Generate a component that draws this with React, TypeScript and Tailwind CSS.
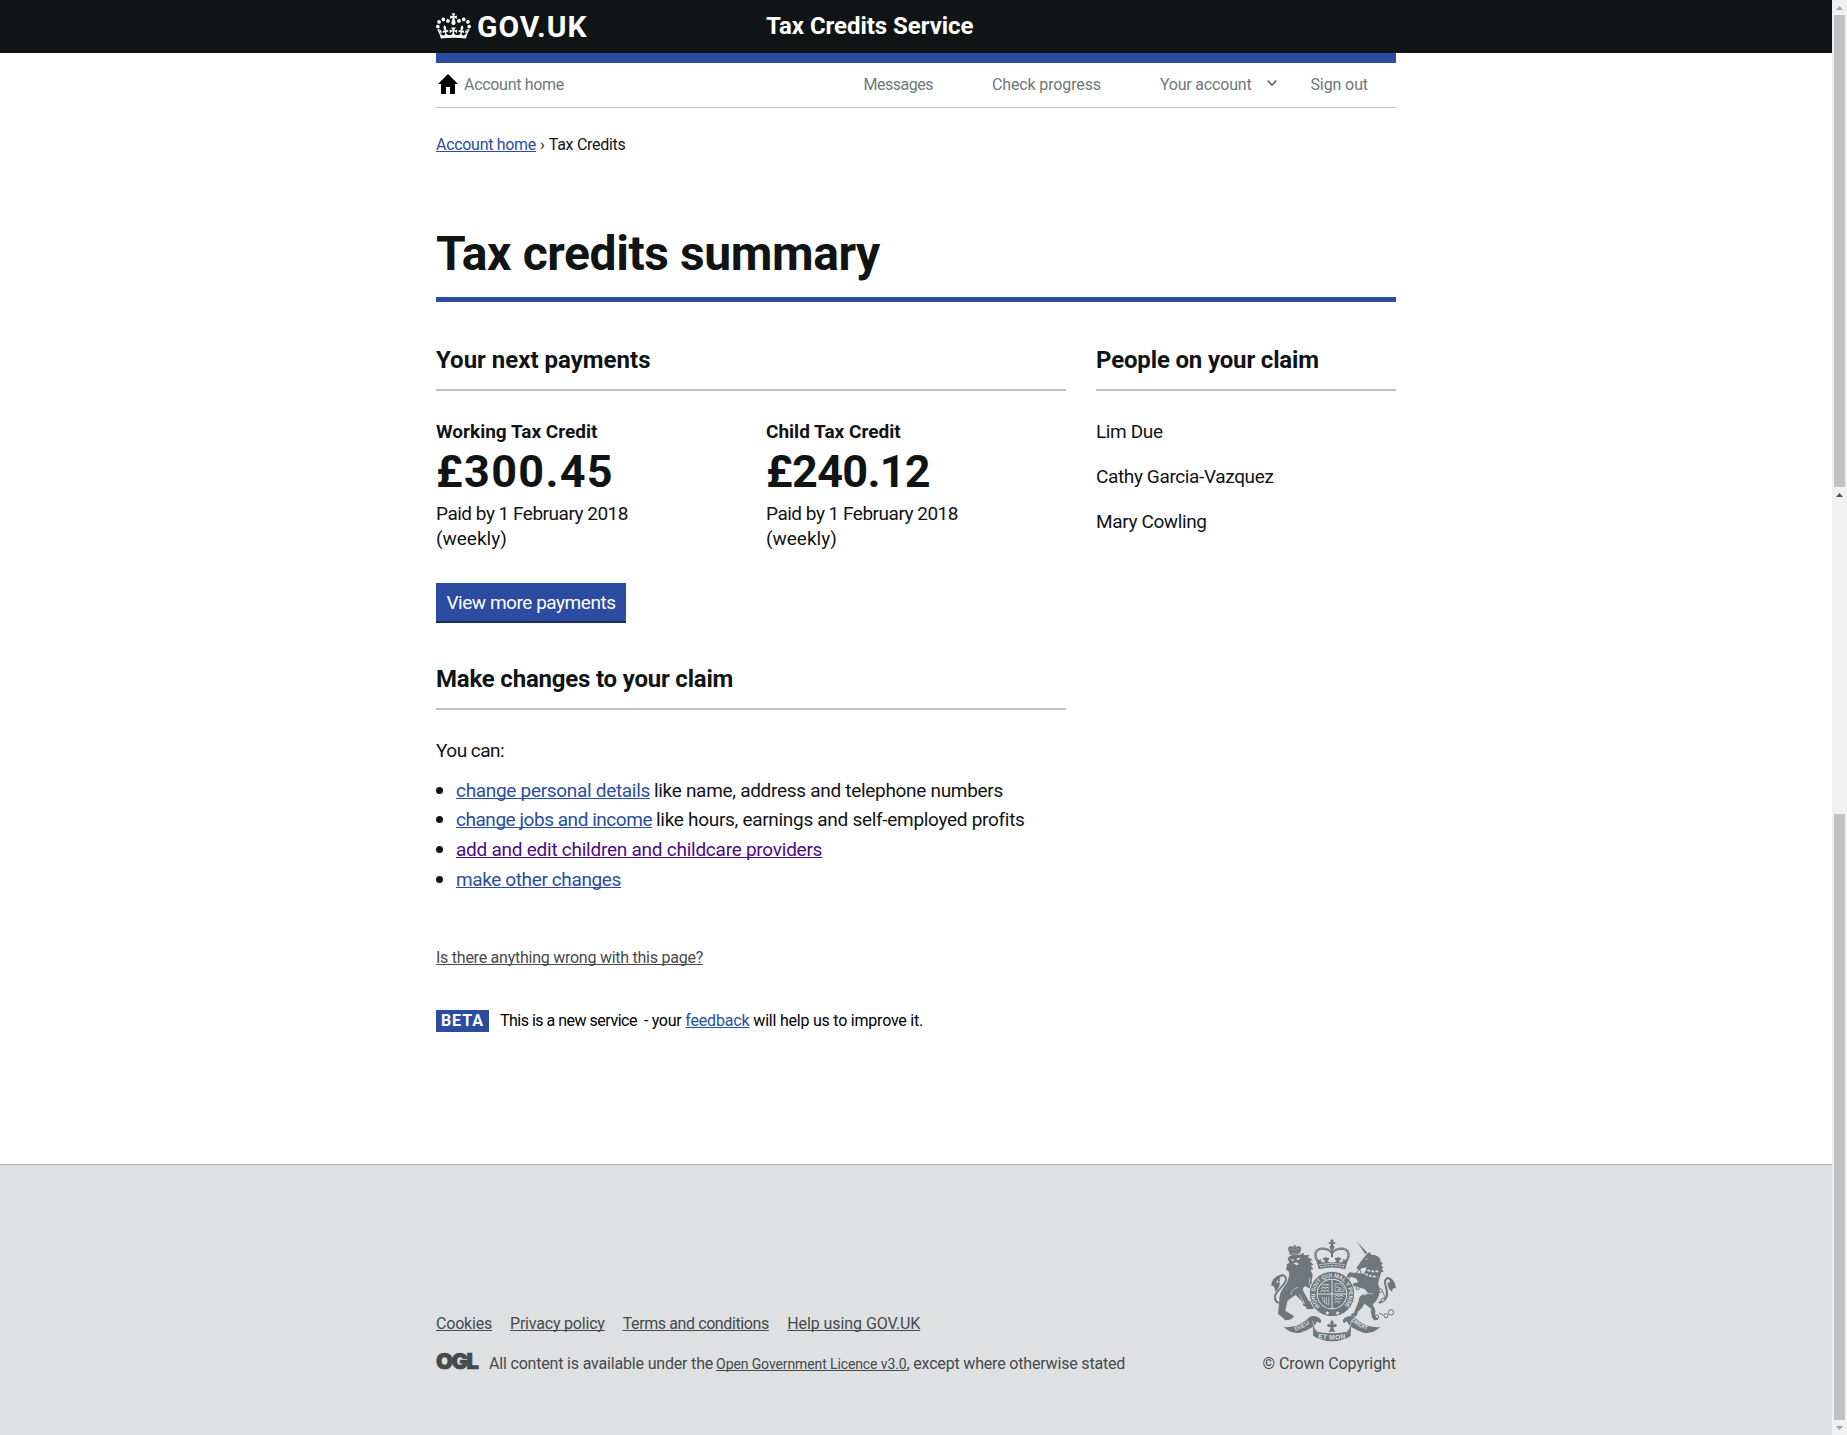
import type { ReactNode } from "react";

const link = "underline decoration-1 underline-offset-1 [text-decoration-skip-ink:none]";

function Crown() {
  return (
    <svg viewBox="0 0 132 97" className="mb-px h-[26px] w-[35px] shrink-0 fill-white">
      <path d="M25 30.2c3.5 1.5 7.7-.2 9.1-3.7 1.5-3.6-.2-7.8-3.9-9.2-3.6-1.4-7.6.3-9.1 3.9-1.4 3.5.3 7.5 3.9 9zM9 39.5c3.6 1.5 7.8-.2 9.2-3.7 1.5-3.6-.2-7.8-3.9-9.1-3.6-1.5-7.6.2-9.1 3.8-1.4 3.5.3 7.5 3.8 9zM4.4 57.2c3.5 1.5 7.7-.2 9.1-3.8 1.5-3.6-.2-7.7-3.9-9.1-3.5-1.5-7.6.3-9.1 3.8-1.4 3.5.3 7.6 3.9 9.1zm38.3-21.4c3.5 1.5 7.7-.2 9.1-3.8 1.5-3.6-.2-7.7-3.9-9.1-3.6-1.5-7.6.3-9.1 3.8-1.3 3.6.4 7.7 3.9 9.1zm64.4-5.6c-3.6 1.5-7.8-.2-9.1-3.7-1.5-3.6.2-7.8 3.8-9.2 3.6-1.4 7.7.3 9.2 3.9 1.3 3.5-.4 7.5-3.9 9zm15.9 9.3c-3.6 1.5-7.7-.2-9.1-3.7-1.5-3.6.2-7.8 3.7-9.1 3.6-1.5 7.7.2 9.2 3.8 1.5 3.5-.3 7.5-3.8 9zm4.7 17.7c-3.6 1.5-7.8-.2-9.2-3.8-1.5-3.6.2-7.7 3.9-9.1 3.6-1.5 7.7.3 9.2 3.8 1.3 3.5-.4 7.6-3.9 9.1zM89.3 35.8c-3.6 1.5-7.8-.2-9.2-3.8-1.4-3.6.2-7.7 3.9-9.1 3.6-1.5 7.7.3 9.2 3.8 1.4 3.6-.3 7.7-3.9 9.1zM69.7 17.7l8.9 4.7V9.3l-8.9 2.8c-.2-.3-.5-.6-.9-.9L72.4 0H59.6l3.5 11.2c-.3.3-.6.5-.9.9l-8.8-2.8v13.1l8.8-4.7c.3.3.6.7.9.9l-5 15.4v.1c-.2.8-.4 1.6-.4 2.4 0 4.1 3.1 7.5 7 8.1h.2c.3 0 .7.1 1 .1.4 0 .7 0 1-.1h.2c4-.6 7.1-4.1 7.1-8.1 0-.8-.1-1.7-.4-2.4V34l-5.1-15.4c.4-.2.7-.6 1-.9zM66 92.8c16.9 0 32.8 1.1 47.1 3.2 4-16.9 8.9-26.7 14-33.5l-9.6-3.4c1 4.9 1.1 7.2 0 10.2-1.5-1.4-3-4.3-4.2-8.7L108.6 76c2.8-2 5-3.2 7.5-3.3-4.4 9.4-10 11.9-13.6 11.2-4.3-.8-6.3-4.6-5.6-7.9 1-4.7 5.7-5.9 8-.5 4.3-8.7-3-11.4-7.6-8.8 7.1-7.2 7.9-13.5 2.1-21.1-8 6.1-8.1 12.3-4.5 20.8-4.7-5.4-12.1-2.5-9.5 6.2 3.4-5.2 7.9-2 7.2 3.1-.6 4.3-6.4 7.8-13.5 7.2-10.3-.9-10.9-8-11.2-13.8 2.5-.5 7.1 1.8 11 7.3L80.2 60c-4.1 4.4-8 5.3-12.3 5.4 1.4-4.4 8-11.6 8-11.6H55.5s6.4 7.2 7.9 11.6c-4.2-.1-8-1-12.3-5.4l1.4 16.4c3.9-5.5 8.5-7.7 10.9-7.3-.3 5.8-.9 12.8-11.1 13.8-7.2.6-12.9-2.9-13.5-7.2-.7-5 3.8-8.3 7.1-3.1 2.7-8.7-4.6-11.6-9.4-6.2 3.7-8.5 3.6-14.7-4.6-20.8-5.8 7.6-5 13.9 2.2 21.1-4.7-2.6-11.9.1-7.7 8.8 2.3-5.5 7.1-4.2 8.1.5.7 3.3-1.3 7.1-5.7 7.9-3.5.7-9-1.8-13.5-11.2 2.5.1 4.7 1.3 7.5 3.3l-4.7-15.4c-1.2 4.4-2.7 7.2-4.3 8.7-1.1-3-.9-5.3 0-10.2l-9.5 3.4c5 6.9 9.9 16.7 14 33.5 14.8-2.1 30.8-3.2 47.7-3.2z" />
    </svg>
  );
}

function Crest() {
  return (
    <svg viewBox="63 59 375 309" className="h-[103px] w-[125px] fill-[#6f777b]">
      {/* centre crown */}
      <circle cx="246" cy="65" r="5" />
      <path d="M236 69h20v5h-20zM243 62h6v26h-6z" />
      <circle cx="246" cy="84" r="7" />
      <path d="M204 126C190 108 196 89 216 88c14 0 25 6 30 14 5-8 16-14 30-14 20 1 26 20 12 38" fill="none" stroke="#6f777b" strokeWidth="7" />
      <path d="M204 126C190 108 196 89 216 88c14 0 25 6 30 14 5-8 16-14 30-14 20 1 26 20 12 38" fill="none" stroke="#dee0e2" strokeWidth="2" strokeDasharray="2 3" />
      <path d="M243 90h6v24h-6z" />
      <path d="M198 118l8 5 8-5-2 8 10 4 3-6-6-3v-6l6 1 3-5 3 5 6-1v6l-5 4 5 4h18l5-4-5-4v-6l6 1 3-5 3 5 6-1v6l-6 3 3 6 10-4-2-8 8 5 8-5-8 32q-40-11-80 0z" />
      <path d="M207 136q39-9 78 0" fill="none" stroke="#dee0e2" strokeWidth="2" />
      <path d="M210 143q36-8 72 0" fill="none" stroke="#dee0e2" strokeWidth="3" strokeDasharray="7 4" />
      {/* lion */}
      <path d="M120 107l-5-14q-3-10 6-12 6-1 10 4v-8h6v8q4-5 10-4 9 2 6 12l-5 12z" />
      <path d="M119 92q8-8 15 2 7-10 16-3M121 101h28" fill="none" stroke="#dee0e2" strokeWidth="2" strokeDasharray="3 3" />
      <path d="M119 110q15-6 31-3l10-8 2 9 16-2-4 8 14 7-8 5 10 10-7 3 7 11-8 2 6 14q0 12-4 20 8 9 18 6l-2 6-14-1 8 9 10 4-4 8 8 6-10 2-12-6-8-13-13-6q-8 2-5 15l16 28 12 5q11 10 8 17-14 6-26 3l-2-6-10-6 3-6-24-24q-14 8-25 19l-6 28 14 9q10 3 12 10l-12 8-14 2-10-10-12-9 4-42q-1-20 14-39 14-18 16-39l-2-8-6-3q-4-8 1-12l-1-6 8-4-5-14z" />
      <path d="M122 121l10-2-3 7zM140 117l12-2-5 6-6 1zM130 132l9-3 8 5-7 4z" fill="#dee0e2" />
      <path d="M144 204q-18 4-22 22M148 225l16 28M183 206q-8-14-4-30" fill="none" stroke="#dee0e2" strokeWidth="2" />
      <path d="M86 250q-11-2-11-17c0-20 29-30 33-52 1-11-9-16-17-11q-9 6-3 16" fill="none" stroke="#6f777b" strokeWidth="6" />
      <path d="M92 166q-25 6-29 33 12-3 12 18 16-12 14-30-6 0-10 6 2-15 16-22z" />
      {/* unicorn */}
      <path d="M320 66l32 34-6 5z" />
      <path d="M350 105l8-7 6 8q20 0 29 16l-4 1 10 11-6 2 8 10-6 1 6 10-7 1-6 20-4 16q6 10 5 24-3 20-15 32l-6 5 6 13 2 22 10 11-14 2-7-11-1-23-20-16q-8 14-20 24l-4 13-15 3-2-8 9-5 14-34q-1-15 12-20l16-4-9-12-22-8-8-2-11 15-10-1-2-5 10-2 9-15 14-3-7-12-18-5-3 14-9 3-5-4 7-4 2-16 8-6 28 4 16-3 6-16-13 2-8 6-10-5 12-18z" />
      <path d="M347 119l6-2-2 5z" fill="#dee0e2" />
      <path d="M342 148q16 10 44 8M336 158q18 14 46 14" fill="none" stroke="#dee0e2" strokeWidth="5" strokeDasharray="8 4" />
      <path d="M342 228q10-8 26-5" fill="none" stroke="#dee0e2" strokeWidth="2" />
      <path d="M386 250c23-5 28-20 24-38-4-16-10-30 2-35 10-2 14 8 9 17" fill="none" stroke="#6f777b" strokeWidth="6" />
      <path d="M408 174q25-2 30 32-13-2-11 12-15-8-14-30 8 1 10 6-1-12-15-20z" />
      <g fill="none" stroke="#6f777b" strokeWidth="3">
        <circle cx="423" cy="279" r="8" /><circle cx="408" cy="289" r="6" />
        <circle cx="380" cy="293" r="6" /><circle cx="369" cy="277" r="6" />
        <circle cx="323" cy="206" r="5" /><circle cx="327" cy="158" r="6" /><circle cx="316" cy="166" r="5" />
        <path d="M387 281l14 7M388 205q22 20 12 37" />
      </g>
      <g fill="#dee0e2" stroke="#6f777b" strokeWidth="3"><circle cx="392" cy="214" r="5" /><circle cx="398" cy="242" r="5" /></g>
      {/* garter and shield */}
      <circle cx="246" cy="224" r="68" stroke="#dee0e2" strokeWidth="3" />
      <circle cx="246" cy="224" r="46" fill="#dee0e2" />
      <circle cx="246" cy="224" r="43" />
      <path d="M246 181v86M203 224h86" stroke="#dee0e2" strokeWidth="3" />
      <g stroke="#dee0e2" strokeWidth="3" fill="none">
        <path d="M215 199l5-4 6 3 5-3 6 3M213 208l6-4 6 3 6-3 6 3M211 217l6-4 7 3 6-3 7 3" />
        <path d="M254 232l6-4 7 3 6-3 7 3M254 241l6-4 6 3 6-3 5 3M254 250l5-4 6 3 6-3" />
        <path d="M255 193h17l10 14v9h-27zM264 198l-4 6 12 2-9 7 13-4" strokeWidth="2" />
        <path d="M217 232q0 18 19 24V232M223 233v16M229 233v21" strokeWidth="2" />
      </g>
      <defs>
        <path id="garter" d="M210 261A51 51 0 1 1 282 261" />
        <path id="dieu" d="M136 335Q164 328 190 303" />
        <path id="mon" d="M204 357Q246 364 290 357" />
        <path id="droit" d="M303 304Q330 329 364 335" />
      </defs>
      <path d="M226 281l6-5 6 5-6 5zM257 281l6-5 6 5-6 5z" fill="#dee0e2" />
      {/* motto ribbon */}
      <path d="M101 323q45 4 79-31 16-6 28 4 10 9 2 16l-9-6q-4 20-50 34-28 4-50-17z" />
      <path d="M391 323q-45 4-79-31-16-6-28 4-10 9-2 16l9-6q4 20 50 34 28 4 50-17z" />
      <path d="M188 306l2 44 12 7q44 18 88 0l12-7 2-44q-4 22-16 32-42 8-84 0-12-10-16-32z" />
      <path d="M188 304q3 25 15 35M304 304q-3 25-15 35" fill="none" stroke="#dee0e2" strokeWidth="2" />
      <path d="M246 301l6 9-3 8q8-8 11-2 2 6-5 7h-5l2 9 5 5h-22l5-5 2-9h-5q-7-1-5-7 3-6 11 2l-3-8z" />
      <g fill="#dee0e2" className="font-['Liberation_Sans'] font-bold">
        <text fontSize="17" textLength="238" lengthAdjust="spacing"><textPath href="#garter">HONI SOIT QUI MAL Y PENSE</textPath></text>
        <text fontSize="18"><textPath href="#dieu" letterSpacing="2">DIEU</textPath></text>
        <text fontSize="20"><textPath href="#mon" letterSpacing="1">ET MON</textPath></text>
        <text fontSize="18"><textPath href="#droit">DROIT</textPath></text>
      </g>
    </svg>
  );
}

function Heading({ children, className }: { children: ReactNode; className: string }) {
  return <h2 className={"border-b-2 border-[#bfc1c3] pb-[14px] text-2xl leading-[30px] font-bold " + className}>{children}</h2>;
}

function Payment({ title, amount, tracking }: { title: string; amount: string; tracking: string }) {
  return (
    <div className="w-[330px] shrink-0 text-[19px] leading-[25px]">
      <h3 className="font-bold">{title}</h3>
      <p className={"mt-[3px] text-[45px] leading-[50px] font-bold " + tracking}>{amount}</p>
      <p className="mt-1 tracking-[-0.49px]">Paid by 1 February 2018</p>
      <p>(weekly)</p>
    </div>
  );
}

function Change({ label, rest, a, b }: { label: string; rest?: string; a: string; b?: string }) {
  return (
    <li className="mb-[4.75px] flex items-center whitespace-nowrap">
      <span className="mr-[13px] size-[7px] rounded-full bg-[#111414]" />
      <a className={link + " " + a}>{label}</a>
      {rest && <span className={"ml-[4px] " + b}>{rest}</span>}
    </li>
  );
}

function Scrollbar() {
  return (
    <div className="flex w-[15px] shrink-0 flex-col items-center bg-[#f1f1f1]">
      <div className="flex h-[15px] items-center"><svg viewBox="0 0 7 4" className="h-1 w-[7px] fill-[#a3a3a3]"><path d="M3.5 0L7 4H0z" /></svg></div>
      <div className="h-[472px] w-[11px] bg-[#c1c1c1]" />
      <div className="flex h-[15px] items-center"><svg viewBox="0 0 7 4" className="h-1 w-[7px] fill-[#505050]"><path d="M3.5 0L7 4H0z" /></svg></div>
      <div className="mt-[312px] h-[606px] w-[11px] bg-[#c1c1c1]" />
      <div className="flex h-[15px] items-center"><svg viewBox="0 0 7 4" className="h-1 w-[7px] fill-[#a3a3a3]"><path d="M0 0h7L3.5 4z" /></svg></div>
    </div>
  );
}

export default function App() {
  return (
    <div className="flex h-[1435px] w-[1847px] overflow-hidden bg-white font-['Roboto',sans-serif] text-[#111414]">
      <div className="flex min-w-0 flex-1 flex-col">
        <header className="bg-[#111414] text-white">
          <div className="mx-auto flex h-[53px] w-[960px]">
            <div className="flex w-[330px] items-center">
              <Crown />
              <span className="ml-[6px] text-[30px] leading-[53px] font-bold tracking-[0.95px]">GOV.UK</span>
            </div>
            <span className="text-2xl leading-[52px] font-bold tracking-[-0.05px]">Tax Credits Service</span>
          </div>
        </header>
        <main className="mx-auto w-[960px]">
          <nav className="flex h-[55px] border-t-[10px] border-b border-t-[#2b4ca1] border-b-[#bfc1c3] text-base leading-[43px] text-[#6f777b]">
            <svg viewBox="0 0 20 20" className="mt-[11px] ml-[1.5px] size-5 fill-black"><path d="M10 0l10 10h-3v10h-5v-7H8v7H3V10H0z" /></svg>
            <span className="ml-[6.5px] tracking-[-0.3px]">Account home</span>
            <span className="ml-auto tracking-[-0.5px]">Messages</span>
            <span className="ml-[59px] tracking-[-0.13px]">Check progress</span>
            <span className="ml-[59px] tracking-[-0.2px]">Your account</span>
            <svg viewBox="0 0 10 6" className="mt-[17px] ml-[16px] h-[6px] w-[10px] fill-none stroke-[#5f6669] stroke-[1.7]"><path d="M.7.7L5 5 9.300.7" /></svg>
            <span className="mr-7 ml-[33px] tracking-[-0.1px]">Sign out</span>
          </nav>
          <div className="mt-[26px] flex text-base leading-[21px]">
            <a className={link + " tracking-[-0.3px] text-[#2b4ca1]"}>Account home</a>
            <span className="ml-[4px]">›</span>
            <span className="ml-[4px] tracking-[-0.3px]">Tax Credits</span>
          </div>
          <h1 className="mt-[74px] border-b-[5px] border-[#2b4ca1] pb-[18px] text-5xl leading-[50px] font-bold tracking-[-0.4px]">Tax credits summary</h1>
          <div className="mt-[43px] flex gap-[30px]">
            <div className="w-[630px]">
              <Heading className="">Your next payments</Heading>
              <div className="mt-7 flex">
                <Payment title="Working Tax Credit" amount="£300.45" tracking="tracking-[1.3px]" />
                <Payment title="Child Tax Credit" amount="£240.12" tracking="tracking-[-0.7px]" />
              </div>
              <button className="mt-8 block h-10 w-[190px] border-b-2 border-[#1a2e61] bg-[#2b4ca1] text-[19px] leading-[39px] tracking-[-0.46px] text-white">View more payments</button>
              <Heading className="mt-[41px] tracking-[-0.2px]">Make changes to your claim</Heading>
              <p className="mt-7 text-[19px] leading-[25px] tracking-[-0.5px]">You can:</p>
              <ul className="mt-[14.6px] mb-[0.4px] text-[19px] leading-[25px]">
                <Change label="change personal details" a="tracking-[-0.31px] text-[#2b4ca1]" rest="like name, address and telephone numbers" b="tracking-[-0.3px]" />
                <Change label="change jobs and income" a="tracking-[-0.46px] text-[#2b4ca1]" rest="like hours, earnings and self-employed profits" b="tracking-[-0.3px]" />
                <Change label="add and edit children and childcare providers" a="tracking-[-0.25px] text-[#4c0888]" />
                <Change label="make other changes" a="tracking-[-0.38px] text-[#2b4ca1]" />
              </ul>
            </div>
            <aside className="w-[300px]">
              <Heading className="tracking-[-0.16px]">People on your claim</Heading>
              <ul className="mt-7 flex flex-col gap-5 text-[19px] leading-[25px] tracking-[-0.37px]">
                <li>Lim Due</li>
                <li>Cathy Garcia-Vazquez</li>
                <li>Mary Cowling</li>
              </ul>
            </aside>
          </div>
          <p className="mt-[50px] text-base leading-[21px] tracking-[-0.25px] text-[#454a4c]"><a className={link}>Is there anything wrong with this page?</a></p>
          <div className="mt-[42px] flex h-[22px] text-base leading-[21px] text-black">
            <strong className="w-[53px] bg-[#2b4ca1] pl-[5px] tracking-[0.9px] text-white">BETA</strong>
            <span className="ml-[11px] tracking-[-0.5px]">This is a new service</span>
            <span className="ml-[7px] tracking-[-0.3px]">- your</span>
            <a className={link + " ml-[4px] tracking-[-0.19px] text-[#2b4ca1]"}>feedback</a>
            <span className="ml-[4px] tracking-[-0.22px]">will help us to improve it.</span>
          </div>
        </main>
        <footer className="mt-auto h-[271px] border-t border-[#a1acb2] bg-[#dee0e2] text-base leading-[21px] text-[#454a4c]">
          <div className="mx-auto flex w-[960px] justify-between">
            <div className="pt-[148px]">
              <div className="flex">
                <a className={link + " w-[56px] tracking-[-0.2px]"}>Cookies</a>
                <a className={link + " ml-[18px] tracking-[-0.2px]"}>Privacy policy</a>
                <a className={link + " ml-[18px] tracking-[-0.4px]"}>Terms and conditions</a>
                <a className={link + " ml-[18.5px] tracking-[-0.08px]"}>Help using GOV.UK</a>
              </div>
              <div className="mt-[19px] flex whitespace-nowrap">
                <span className="w-[53px] font-['Inter'] text-[22px] leading-[17px] font-black tracking-[-1.6px] [-webkit-text-stroke:0.7px_#454a4c]">OGL</span>
                <span className="tracking-[-0.18px]">All content is available under the</span>
                <a className={link + " ml-[3px] text-sm leading-[22px] tracking-[-0.11px]"}>Open Government Licence v3.0</a>
                <span className="tracking-[-0.18px]">, except where otherwise stated</span>
              </div>
            </div>
            <div className="flex flex-col items-end pt-[74px]">
              <Crest />
              <span className="mt-[11px] tracking-[-0.06px]">© Crown Copyright</span>
            </div>
          </div>
        </footer>
      </div>
      <Scrollbar />
    </div>
  );
}
